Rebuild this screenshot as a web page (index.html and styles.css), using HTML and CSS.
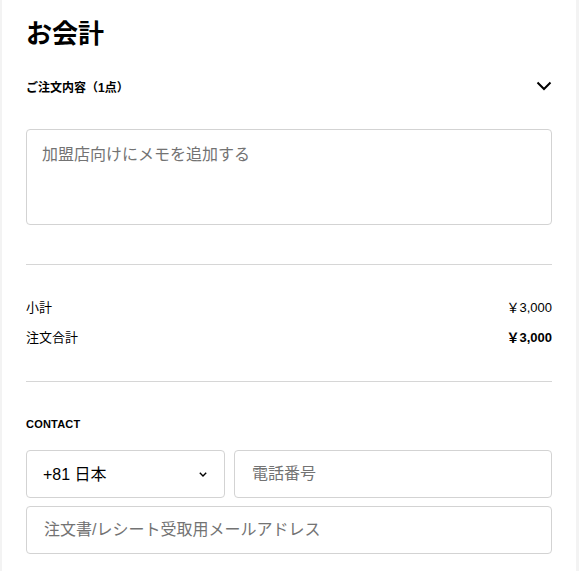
FILE: index.html
```html
<!DOCTYPE html>
<html lang="ja">
<head>
    <meta charset="UTF-8">
    <meta name="viewport" content="width=device-width, initial-scale=1.0">
    <title>お会計</title>
    <link rel="stylesheet" href="styles.css">
</head>
<body>
    <div class="panel">
        <h1>お会計</h1>

        <div class="order-toggle">
            <span>ご注文内容（1点）</span>
            <svg width="16" height="10" viewBox="0 0 16 10">
                <path d="M1.5 1.5 L8 8 L14.5 1.5" fill="none" stroke="#000" stroke-width="2"/>
            </svg>
        </div>

        <textarea class="memo" placeholder="加盟店向けにメモを追加する"></textarea>

        <hr class="divider">

        <div class="totals">
            <div class="total-row">
                <span>小計</span>
                <span>￥3,000</span>
            </div>
            <div class="total-row grand">
                <span>注文合計</span>
                <span>￥3,000</span>
            </div>
        </div>

        <hr class="divider">

        <h2 class="section-title">CONTACT</h2>

        <div class="contact-grid">
            <label class="select-box">
                <select>
                    <option>+81 日本</option>
                </select>
                <svg width="8" height="5" viewBox="0 0 8 5">
                    <path d="M0.8 0.8 L4 4 L7.2 0.8" fill="none" stroke="#000" stroke-width="1.4"/>
                </svg>
            </label>
            <input class="field" type="tel" placeholder="電話番号">
            <input class="field wide" type="email" placeholder="注文書/レシート受取用メールアドレス">
        </div>
    </div>
</body>
</html>
```

FILE: styles.css
```css
body {
    margin: 0;
    background-color: #f3f3f3;
    font-family: "Liberation Sans", "Noto Sans CJK JP", sans-serif;
    color: #000;
    overflow: hidden;
}

.panel {
    margin-left: 2px;
    width: 574px;
    height: 100vh;
    background: #fff;
    padding: 16px 24px 0;
    box-sizing: border-box;
}

h1 {
    margin: 0;
    font-size: 26px;
    line-height: 36px;
    font-weight: bold;
}

.order-toggle {
    margin-top: 22px;
    height: 24px;
    display: flex;
    align-items: center;
    justify-content: space-between;
    font-size: 12px;
    font-weight: bold;
}

.memo {
    display: block;
    margin-top: 31px;
    width: 100%;
    height: 96px;
    box-sizing: border-box;
    border: 1px solid #d3d3d3;
    border-radius: 4px;
    padding: 14px 15px;
    font-family: inherit;
    font-size: 16px;
    line-height: 22px;
    resize: none;
}

::placeholder {
    color: #737373;
    opacity: 1;
}

.divider {
    margin: 39px 0 0;
    border: none;
    border-top: 1px solid #d6d6d6;
}

.totals {
    padding: 31px 0 35px;
    display: flex;
    flex-direction: column;
    gap: 10px;
}

.total-row {
    display: flex;
    justify-content: space-between;
    align-items: center;
    height: 20px;
    font-size: 13px;
}

.total-row.grand {
    font-weight: bold;
}

.total-row.grand span:first-child {
    font-weight: normal;
}

.totals + .divider {
    margin-top: 0;
}

.section-title {
    margin: 34px 0 0;
    font-size: 11px;
    line-height: 16px;
    font-weight: bold;
    letter-spacing: 0.2px;
}

.contact-grid {
    margin-top: 18px;
    display: grid;
    grid-template-columns: 199px 1fr;
    gap: 8px 9px;
}

.select-box {
    height: 48px;
    box-sizing: border-box;
    border: 1px solid #d3d3d3;
    border-radius: 4px;
    display: flex;
    align-items: center;
    padding: 0 17px 0 16px;
}

.select-box select {
    flex: 1;
    appearance: none;
    -webkit-appearance: none;
    border: none;
    background: transparent;
    font-family: inherit;
    font-size: 16px;
    color: #000;
    padding: 0;
    outline: none;
}

.field {
    height: 48px;
    box-sizing: border-box;
    border: 1px solid #d3d3d3;
    border-radius: 4px;
    padding: 0 17px;
    font-family: inherit;
    font-size: 16px;
}

.field.wide {
    grid-column: 1 / 3;
}
```
